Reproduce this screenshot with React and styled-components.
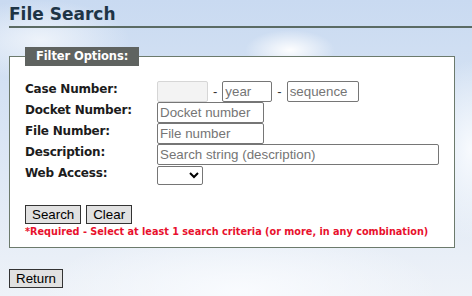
import React from 'react';
import styled, { createGlobalStyle } from 'styled-components';

const GlobalStyle = createGlobalStyle`
  html, body {
    margin: 0;
    padding: 0;
  }
  body {
    width: 472px;
    height: 296px;
    overflow: hidden;
    font-family: "DejaVu Sans", Verdana, sans-serif;
    background:
      radial-gradient(ellipse 45px 20px at 290px 50px, rgba(255,255,255,0.95), rgba(255,255,255,0) 100%),
      radial-gradient(ellipse 90px 40px at 40px 40px, rgba(245,248,252,0.8), rgba(255,255,255,0) 100%),
      radial-gradient(ellipse 40px 90px at 470px 150px, rgba(250,252,255,0.9), rgba(255,255,255,0) 100%),
      radial-gradient(ellipse 200px 60px at 240px 290px, rgba(250,252,255,0.9), rgba(255,255,255,0) 100%),
      linear-gradient(180deg, #c9daf1 0%, #d9e5f4 45%, #eef2f8 100%);
  }
`;

const Page = styled.div`
  padding: 4px 0 0 9px;
`;

const Title = styled.h1`
  margin: 0;
  font-size: 17px;
  line-height: 21px;
  font-weight: bold;
  color: #1e3445;
  border-bottom: 2px solid #5b6b64;
  padding-bottom: 1px;
`;

const Fieldset = styled.fieldset`
  margin: 19px 17px 0 0;
  padding: 15px 15px 10px 15px;
  border: 1px solid #6c7a6c;
  background: #fff;
`;

const Legend = styled.legend`
  background: #5f6360;
  color: #fff;
  font-weight: bold;
  font-size: 11.5px;
  letter-spacing: -0.1px;
  line-height: 19px;
  padding: 0 11px;
`;

const Grid = styled.div`
  display: grid;
  grid-template-columns: 132px auto;
  grid-auto-rows: 21px;
  align-items: center;
`;

const Label = styled.div`
  font-size: 12px;
  font-weight: bold;
  letter-spacing: -0.2px;
  color: #1c1c1c;
  align-self: start;
  padding-top: 1px;
`;

const Field = styled.div`
  display: flex;
  align-items: center;
  gap: 4px;
`;

const Dash = styled.span`
  font-family: "Liberation Sans", Arial, sans-serif;
  font-size: 13px;
  color: #333;
  padding: 0 1px;
`;

const TextInput = styled.input`
  box-sizing: border-box;
  width: ${p => p.$w}px;
  height: 21px;
  margin: 0;
  padding: 1px 2px;
  font-family: "Liberation Sans", Arial, sans-serif;
  font-size: 13.33px;
  border: 1px solid ${p => (p.disabled ? '#d6d6d6' : '#767676')};
  border-radius: 2px;
  background: ${p => (p.disabled ? '#f3f3f3' : '#fff')};
  &::placeholder {
    color: #757575;
  }
`;

const Select = styled.select`
  box-sizing: border-box;
  width: 46px;
  height: 19px;
  margin: 0;
  font-size: 13px;
  border: 1px solid #767676;
  border-radius: 2px;
  background: #fff;
`;

const Buttons = styled.div`
  display: flex;
  gap: 5px;
  margin-top: 19px;
`;

const Button = styled.button`
  font-family: "Liberation Sans", Arial, sans-serif;
  font-size: 13.33px;
  line-height: 15px;
  padding: 1px 6px;
  margin: 0;
  background: #e1e1e1;
  border: 1px solid #333;
  border-radius: 0;
  color: #000;
`;

const Required = styled.div`
  margin-top: 2px;
  color: #e8112d;
  font-size: 9.7px;
  font-weight: bold;
  white-space: nowrap;
`;

const Footer = styled.div`
  margin-top: 20px;
`;

export default function App() {
  return (
    <>
      <GlobalStyle />
      <Page>
        <Title>File Search</Title>
        <Fieldset>
          <Legend>Filter Options:</Legend>
          <Grid>
            <Label>Case Number:</Label>
            <Field>
              <TextInput $w={51} disabled />
              <Dash>-</Dash>
              <TextInput $w={50} placeholder="year" />
              <Dash>-</Dash>
              <TextInput $w={72} placeholder="sequence" />
            </Field>
            <Label>Docket Number:</Label>
            <Field>
              <TextInput $w={107} placeholder="Docket number" />
            </Field>
            <Label>File Number:</Label>
            <Field>
              <TextInput $w={107} placeholder="File number" />
            </Field>
            <Label>Description:</Label>
            <Field>
              <TextInput $w={282} placeholder="Search string (description)" />
            </Field>
            <Label>Web Access:</Label>
            <Field>
              <Select defaultValue="">
                <option value=""></option>
                <option value="Y">Yes</option>
                <option value="N">No</option>
              </Select>
            </Field>
          </Grid>
          <Buttons>
            <Button>Search</Button>
            <Button>Clear</Button>
          </Buttons>
          <Required>*Required - Select at least 1 search criteria (or more, in any combination)</Required>
        </Fieldset>
        <Footer>
          <Button>Return</Button>
        </Footer>
      </Page>
    </>
  );
}
